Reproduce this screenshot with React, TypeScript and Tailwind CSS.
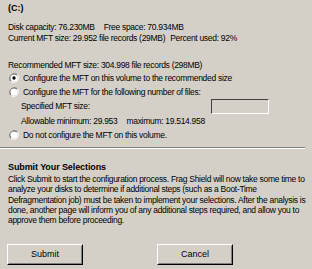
import React from "react";

const Radio = ({ checked }: { checked?: boolean }) => (
  <svg width="10" height="10" viewBox="0 0 12 12" className="shrink-0">
    <path d="M10.2 1.8A6 6 0 0 0 1.8 10.2" stroke="#808080" strokeWidth="1" fill="none" />
    <path d="M9.5 2.5A5 5 0 0 0 2.5 9.5" stroke="#404040" strokeWidth="1" fill="none" />
    <path d="M1.8 10.2A6 6 0 0 0 10.2 1.8" stroke="#ffffff" strokeWidth="1" fill="none" />
    <circle cx="6" cy="6" r="4.3" fill="#ffffff" />
    {checked && <circle cx="6" cy="6" r="2" fill="#000000" />}
  </svg>
);

const Button = ({ label }: { label: string }) => (
  <div className="w-[76px] h-[21px] border border-t-white border-l-white border-r-black border-b-black">
    <div className="w-full h-full flex items-center justify-center border border-t-[#d4d0c8] border-l-[#d4d0c8] border-r-[#808080] border-b-[#808080]">
      {label}
    </div>
  </div>
);

export default function App() {
  return (
    <div className="w-[312px] h-[269px] overflow-hidden bg-[#d4d0c8] text-black text-[8.5px] tracking-[-0.3px] leading-[11px] [font-family:'Liberation_Sans',Arial,sans-serif]">
      <div className="pl-2 pt-[3px] font-bold tracking-normal text-[9px]">(C:)</div>

      <div className="pl-2 mt-[8px] flex">
        <span>Disk capacity: 76.230MB</span>
        <span className="ml-[9px]">Free space: 70.934MB</span>
      </div>
      <div className="pl-2 flex">
        <span>Current MFT size: 29.952 file records (29MB)</span>
        <span className="ml-[5px]">Percent used: 92%</span>
      </div>

      <div className="pl-2 mt-[16px]">Recommended MFT size: 304.998 file records (298MB)</div>

      <div className="pl-[9px] mt-[1px] flex items-center gap-[4px] h-[12px]">
        <Radio checked />
        <span>Configure the MFT on this volume to the recommended size</span>
      </div>
      <div className="pl-[9px] mt-[2px] flex items-center gap-[4px] h-[12px]">
        <Radio />
        <span>Configure the MFT for the following number of files:</span>
      </div>
      <div className="pl-[21px] mt-[1px] flex items-center h-[15px]">
        <span className="w-[190px]">Specified MFT size:</span>
        <div className="w-[58px] h-[15px] border border-t-[#404040] border-l-[#404040] border-r-white border-b-white"></div>
      </div>
      <div className="pl-[21px] mt-[2px] flex">
        <span>Allowable minimum: 29.953</span>
        <span className="ml-[9px]">maximum: 19.514.958</span>
      </div>
      <div className="pl-[9px] mt-[2px] flex items-center gap-[4px] h-[12px]">
        <Radio />
        <span>Do not configure the MFT on this volume.</span>
      </div>

      <div className="mt-[6px] mr-[7px] border-t border-t-[#808080] border-b border-b-white"></div>

      <div className="pl-2 mt-[13px] font-bold tracking-[-0.1px] text-[9px]">Submit Your Selections</div>
      <div className="pl-2 pr-1 mt-[1px] leading-[10.3px]">
        Click Submit to start the configuration process. Frag Shield will now take some time to analyze your disks to determine if additional steps (such as a Boot-Time Defragmentation job) must be taken to implement your selections. After the analysis is done, another page will inform you of any additional steps required, and allow you to approve them before proceeding.
      </div>

      <div className="flex pl-[7px] gap-[74px] mt-[19px] text-[9px] tracking-normal">
        <Button label="Submit" />
        <Button label="Cancel" />
      </div>
    </div>
  );
}
